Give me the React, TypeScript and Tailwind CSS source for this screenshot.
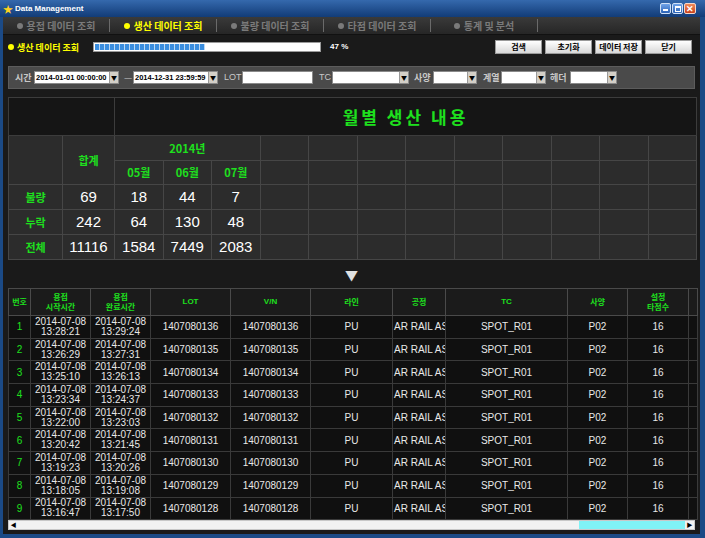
import React from "react";

const KR = "font-['Noto_Sans_CJK_KR','Liberation_Sans',sans-serif]";
const NUM = "font-['Liberation_Sans','Noto_Sans_CJK_KR',sans-serif]";

const tabs = ["용접 데이터 조회", "생산 데이터 조회", "불량 데이터 조회", "타점 데이터 조회", "통계 및 분석"];

const rows = [
  ["1", "13:28:21", "13:29:24", "1407080136"],
  ["2", "13:26:29", "13:27:31", "1407080135"],
  ["3", "13:25:10", "13:26:13", "1407080134"],
  ["4", "13:23:34", "13:24:37", "1407080133"],
  ["5", "13:22:00", "13:23:03", "1407080132"],
  ["6", "13:20:42", "13:21:45", "1407080131"],
  ["7", "13:19:23", "13:20:26", "1407080130"],
  ["8", "13:18:05", "13:19:08", "1407080129"],
  ["9", "13:16:47", "13:17:50", "1407080128"],
];

const summary = [
  ["불량", "69", "18", "44", "7"],
  ["누락", "242", "64", "130", "48"],
  ["전체", "11116", "1584", "7449", "2083"],
];

// 드롭다운 (콤보박스)
function Combo({ className, value }: { className: string; value?: string }) {
  return (
    <div className={`flex h-[13px] items-center bg-white border border-[#8a8a8a] ${className}`}>
      <span className={`flex-1 overflow-hidden whitespace-nowrap pl-[1px] text-[7.5px] leading-none text-black ${NUM}`}>
        {value}
      </span>
      <span className="flex h-[11px] w-[9px] items-center justify-center bg-[#d4d0c8] border-l border-[#999] text-[6px] leading-none text-black">
        ▼
      </span>
    </div>
  );
}

function Btn({ label }: { label: string }) {
  return (
    <button
      className={`h-[14px] w-[47px] bg-gradient-to-b from-white to-[#d8d8d8] border border-[#9a9a9a] text-[8px] font-bold leading-none text-black whitespace-nowrap ${KR}`}
    >
      {label}
    </button>
  );
}

export default function App() {
  const empties = Array.from({ length: 9 });
  return (
    <div className={`w-[705px] h-[538px] flex flex-col bg-[#1b4a86] overflow-hidden ${KR}`}>
      {/* 타이틀바 */}
      <div className="h-[17px] flex items-center bg-gradient-to-b from-[#3569ad] to-[#123c78] px-[3px]">
        <span className="text-[#ffd21e] text-[10px] leading-none">★</span>
        <span className={`ml-[2px] text-[8px] font-bold text-white leading-none ${NUM}`}>Data Management</span>
        <div className="ml-auto flex items-center gap-[1px] pr-[6px]">
          <div className="w-[11px] h-[11px] rounded-[2px] bg-gradient-to-b from-[#6fa3e8] to-[#2b63b8] border border-[#cfe0f7] flex items-end justify-center pb-[2px]">
            <div className="w-[5px] h-[2px] bg-white" />
          </div>
          <div className="w-[11px] h-[11px] rounded-[2px] bg-gradient-to-b from-[#6fa3e8] to-[#2b63b8] border border-[#cfe0f7] flex items-center justify-center">
            <div className="w-[6px] h-[6px] border border-white border-t-2" />
          </div>
          <div className="w-[12px] h-[11px] rounded-[2px] bg-gradient-to-b from-[#f08a5a] to-[#c8401a] border border-[#f7d6c8] flex items-center justify-center text-white text-[9px] font-bold leading-none">
            ✕
          </div>
        </div>
      </div>

      <div className="flex-1 mx-[3px] mr-[5px] mb-[4px] bg-[#1a1a1a] flex flex-col">
        {/* 탭 */}
        <div className="h-[18px] flex items-center bg-gradient-to-b from-[#3a3a3a] to-[#262626] border-b border-[#111]">
          {tabs.map((t, i) => (
            <div
              key={t}
              className={`w-[107px] h-[13px] flex items-center justify-center gap-[4px] border-r border-[#6a6a6a] text-[10px] font-bold leading-none ${
                i === 1 ? "text-[#ffff00]" : "text-[#7a7a7a]"
              }`}
            >
              <span className={`w-[6px] h-[6px] rounded-full ${i === 1 ? "bg-[#ffff00]" : "bg-[#7a7a7a]"}`} />
              {t}
            </div>
          ))}
        </div>

        {/* 진행 상태 + 버튼 */}
        <div className="h-[24px] flex items-center px-[5px]">
          <span className="w-[6px] h-[6px] rounded-full bg-[#ffff00]" />
          <span className="ml-[3px] text-[9px] font-bold text-[#ffff00] leading-none">생산 데이터 조회</span>
          <div className="ml-[14px] w-[228px] h-[10px] bg-white border border-[#9a9a9a] p-[1px]">
            <div className="h-full w-[49%] bg-[repeating-linear-gradient(90deg,#3a8ee0_0px,#3a8ee0_4px,#b9d8f6_4px,#b9d8f6_5px)]" />
          </div>
          <span className={`ml-[9px] text-[8px] font-bold text-white leading-none ${NUM}`}>47 %</span>
          <div className="ml-auto flex gap-[3px] pr-[3px]">
            <Btn label="검색" />
            <Btn label="초기화" />
            <Btn label="데이터 저장" />
            <Btn label="닫기" />
          </div>
        </div>

        {/* 검색 조건 */}
        <div className="mx-[5px] mt-[7px] h-[23px] flex items-center bg-[#4a4a4a] border border-[#5c5c5c] pl-[6px] text-[9px] font-bold text-[#c8c8c8] leading-none">
          <span className="w-[18px]">시간</span>
          <Combo className="w-[85px] ml-[1px]" value="2014-01-01 00:00:00" />
          <span className="ml-[5px] w-[9px] text-[#9a9a9a]">—</span>
          <Combo className="w-[85px]" value="2014-12-31 23:59:59" />
          <span className={`ml-[6px] w-[18px] font-normal ${NUM}`}>LOT</span>
          <div className="w-[71px] h-[13px] bg-white border border-[#8a8a8a]" />
          <span className={`ml-[6px] w-[12px] font-normal ${NUM}`}>TC</span>
          <Combo className="w-[77px] ml-[1px]" />
          <span className="ml-[5px] w-[18px]">사양</span>
          <Combo className="w-[44px] ml-[1px]" />
          <span className="ml-[6px] w-[18px]">계열</span>
          <Combo className="w-[45px]" />
          <span className="ml-[4px] w-[18px]">헤더</span>
          <Combo className="w-[47px] ml-[2px]" />
        </div>

        {/* 월별 생산 내용 */}
        <div className="mx-[5px] mt-[8px]">
          <table className="w-[689px] table-fixed border-collapse border border-[#3c3c3c]">
            <colgroup>
              <col className="w-[54px]" />
              <col className="w-[52px]" />
              {Array.from({ length: 12 }).map((_, i) => (
                <col key={i} />
              ))}
            </colgroup>
            <tbody>
              <tr className="h-[38px] bg-[#151515]">
                <td colSpan={2} className="border border-[#3c3c3c]" />
                <td colSpan={12} className="border border-[#3c3c3c] text-center text-[17px] font-bold tracking-[3px] text-[#1ee01e]">
                  월별 생산 내용
                </td>
              </tr>
              <tr className="h-[25px] bg-[#2c2c2c]">
                <td rowSpan={2} className="border border-[#464646]" />
                <td rowSpan={2} className="border border-[#464646] text-center text-[11px] font-bold text-[#1ee01e]">
                  합계
                </td>
                <td colSpan={3} className="border border-[#464646] text-center text-[11px] font-bold text-[#1ee01e]">
                  2014년
                </td>
                {empties.map((_, i) => (
                  <td key={i} className="border border-[#464646]" />
                ))}
              </tr>
              <tr className="h-[24px] bg-[#2c2c2c]">
                {["05월", "06월", "07월"].map((m) => (
                  <td key={m} className="border border-[#464646] text-center text-[11px] font-bold text-[#1ee01e]">
                    {m}
                  </td>
                ))}
                {empties.map((_, i) => (
                  <td key={i} className="border border-[#464646]" />
                ))}
              </tr>
              {summary.map((r) => (
                <tr key={r[0]} className="h-[25px] bg-[#2c2c2c]">
                  <td className="border border-[#464646] text-center text-[11px] font-bold text-[#1ee01e]">{r[0]}</td>
                  {r.slice(1).map((v, i) => (
                    <td key={i} className={`border border-[#464646] text-center text-[15px] text-white ${NUM}`}>
                      {v}
                    </td>
                  ))}
                  {empties.map((_, i) => (
                    <td key={i} className="border border-[#464646]" />
                  ))}
                </tr>
              ))}
            </tbody>
          </table>
        </div>

        {/* 구분 화살표 */}
        <div className="h-[28px] flex items-center justify-center text-[#e0e0e0] text-[13px] leading-none">▼</div>

        {/* 생산 데이터 목록 */}
        <div className="mx-[5px]">
          <table className="w-[689px] table-fixed border-collapse bg-[#101010]">
            <colgroup>
              <col className="w-[22px]" />
              <col className="w-[60px]" />
              <col className="w-[60px]" />
              <col className="w-[80px]" />
              <col className="w-[80px]" />
              <col className="w-[82px]" />
              <col className="w-[53px]" />
              <col className="w-[122px]" />
              <col className="w-[60px]" />
              <col className="w-[61px]" />
              <col className="w-[9px]" />
            </colgroup>
            <thead>
              <tr className="h-[27px] bg-[#1b1b1b] text-[8px] font-bold leading-[10px] text-[#1ee01e]">
                <th className="border border-[#4a4a4a]">번호</th>
                <th className="border border-[#4a4a4a]">
                  용접
                  <br />
                  시작시간
                </th>
                <th className="border border-[#4a4a4a]">
                  용접
                  <br />
                  완료시간
                </th>
                <th className={`border border-[#4a4a4a] ${NUM}`}>LOT</th>
                <th className={`border border-[#4a4a4a] ${NUM}`}>V/N</th>
                <th className="border border-[#4a4a4a]">라인</th>
                <th className="border border-[#4a4a4a]">공정</th>
                <th className={`border border-[#4a4a4a] ${NUM}`}>TC</th>
                <th className="border border-[#4a4a4a]">사양</th>
                <th className="border border-[#4a4a4a]">
                  설정
                  <br />
                  타점수
                </th>
                <th className="border border-[#4a4a4a]" />
              </tr>
            </thead>
            <tbody className={`${NUM} text-[10px] text-[#e8e8e8]`}>
              {rows.map((r) => (
                <tr key={r[0]} className="h-[22.7px]">
                  <td className="border border-[#3a3a3a] text-center text-[#1ee01e]">{r[0]}</td>
                  <td className="border border-[#3a3a3a] text-center leading-[10px]">
                    2014-07-08
                    <br />
                    {r[1]}
                  </td>
                  <td className="border border-[#3a3a3a] text-center leading-[10px]">
                    2014-07-08
                    <br />
                    {r[2]}
                  </td>
                  <td className="border border-[#3a3a3a] text-center">{r[3]}</td>
                  <td className="border border-[#3a3a3a] text-center">{r[3]}</td>
                  <td className="border border-[#3a3a3a] text-center">PU</td>
                  <td className="border border-[#3a3a3a] overflow-hidden whitespace-nowrap pl-[1px]">AR RAIL ASSY</td>
                  <td className="border border-[#3a3a3a] text-center">SPOT_R01</td>
                  <td className="border border-[#3a3a3a] text-center">P02</td>
                  <td className="border border-[#3a3a3a] text-center">16</td>
                  <td className="border border-[#3a3a3a]" />
                </tr>
              ))}
            </tbody>
          </table>

          {/* 가로 스크롤바 */}
          <div className="h-[10px] flex bg-[#f2f2f2] border border-[#c8c8c8]">
            <div className="w-[9px] flex items-center justify-center text-[6px] leading-none text-black">◀</div>
            <div className="flex-1 flex">
              <div className="flex-1" />
              <div className="w-[106px] bg-[#7ff3f6]" />
            </div>
            <div className="w-[9px] flex items-center justify-center text-[6px] leading-none text-black">▶</div>
          </div>
        </div>
      </div>
    </div>
  );
}
